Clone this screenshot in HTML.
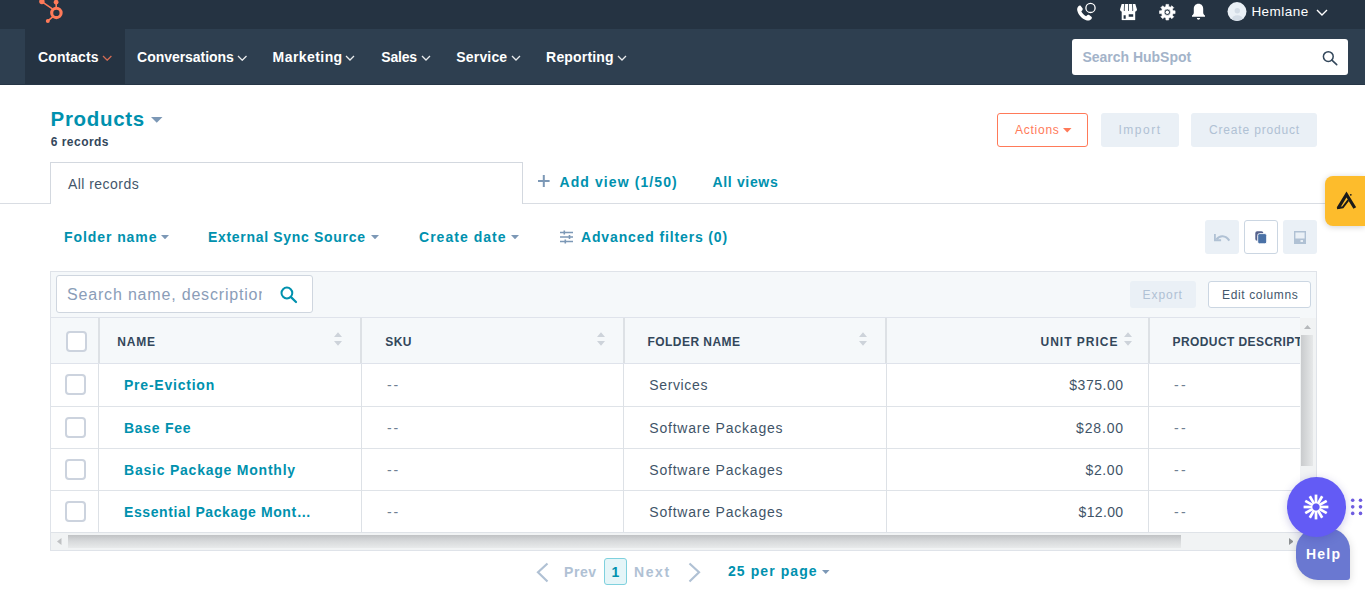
<!DOCTYPE html>
<html lang="en"><head><meta charset="utf-8"><title>Products</title>
<style>
html,body{margin:0;padding:0}
body{width:1365px;height:591px;overflow:hidden;background:#fff;position:relative;font-family:"Liberation Sans", sans-serif;}
.abs{position:absolute;display:block}
.t{position:absolute;white-space:nowrap;line-height:1;font-family:"Liberation Sans", sans-serif;}
</style></head>
<body>
<header class="abs" style="left:0;top:0;width:1365px;height:29px;background:#253342"></header>
<nav class="abs" style="left:0;top:29px;width:1365px;height:56px;background:#2e3f50"></nav>
<div class="abs" style="left:25px;top:29px;width:100px;height:56px;background:#253342"></div>
<div class="abs" style="left:0;top:84px;width:1365px;height:1px;background:#263646"></div>
<svg class="abs" style="left:36px;top:0" width="30" height="26" viewBox="36 0 30 26">
<g fill="#ff7a59" stroke="none">
<circle cx="41.9" cy="1.5" r="2.7"/><circle cx="56.1" cy="2.2" r="2.4"/><circle cx="47.8" cy="21" r="2"/>
</g>
<g stroke="#ff7a59" fill="none" stroke-linecap="round">
<circle cx="56.4" cy="12.9" r="4.700" stroke-width="3.100"/>
<path d="M42.5 2.2 L52 8.6" stroke-width="1.600"/><path d="M56.2 2.5 V7" stroke-width="1.600"/><path d="M48.2 20.6 L52.4 17.2" stroke-width="1.600"/>
</g></svg>
<span class="t" style="left:38.10px;top:49.90px;font-size:14px;color:#fff;letter-spacing:0.064px;font-weight:700;">Contacts</span>
<svg class="abs" style="left:102.00px;top:55.20px" width="10.40" height="6.20" viewBox="-1 -1 10.40 6.20"><path d="M0 0 L4.20 4.20 L8.40 0" fill="none" stroke="#ff7a59" stroke-width="1.3" stroke-opacity="0.8"/></svg>
<span class="t" style="left:137.10px;top:49.90px;font-size:14px;color:#fff;letter-spacing:-0.046px;font-weight:700;">Conversations</span>
<svg class="abs" style="left:236.50px;top:55.17px" width="10.50" height="6.25" viewBox="-1 -1 10.50 6.25"><path d="M0 0 L4.25 4.25 L8.50 0" fill="none" stroke="#fff" stroke-width="1.3" stroke-opacity="0.9"/></svg>
<span class="t" style="left:272.60px;top:49.90px;font-size:14px;color:#fff;letter-spacing:0.431px;font-weight:700;">Marketing</span>
<svg class="abs" style="left:345.00px;top:55.30px" width="10.00" height="6.00" viewBox="-1 -1 10.00 6.00"><path d="M0 0 L4.00 4.00 L8.00 0" fill="none" stroke="#fff" stroke-width="1.3" stroke-opacity="0.9"/></svg>
<span class="t" style="left:381.35px;top:49.90px;font-size:14px;color:#fff;letter-spacing:-0.200px;font-weight:700;">Sales</span>
<svg class="abs" style="left:421.00px;top:55.30px" width="10.00" height="6.00" viewBox="-1 -1 10.00 6.00"><path d="M0 0 L4.00 4.00 L8.00 0" fill="none" stroke="#fff" stroke-width="1.3" stroke-opacity="0.9"/></svg>
<span class="t" style="left:456.35px;top:49.90px;font-size:14px;color:#fff;letter-spacing:0.158px;font-weight:700;">Service</span>
<svg class="abs" style="left:511.00px;top:55.30px" width="10.00" height="6.00" viewBox="-1 -1 10.00 6.00"><path d="M0 0 L4.00 4.00 L8.00 0" fill="none" stroke="#fff" stroke-width="1.3" stroke-opacity="0.9"/></svg>
<span class="t" style="left:546.10px;top:49.90px;font-size:14px;color:#fff;letter-spacing:0.181px;font-weight:700;">Reporting</span>
<svg class="abs" style="left:617.00px;top:55.30px" width="10.00" height="6.00" viewBox="-1 -1 10.00 6.00"><path d="M0 0 L4.00 4.00 L8.00 0" fill="none" stroke="#fff" stroke-width="1.3" stroke-opacity="0.9"/></svg>
<svg class="abs" style="left:1075px;top:2px" width="23" height="21" viewBox="0 0 23 21">
<path d="M3.2 3.6c.9-.9 1.9-1.2 2.6-.4l1.700 2.300c.5.7.3 1.500-.3 2.100l-.9.9c.9 2 2.600 3.800 4.800 4.900l1-.9c.6-.6 1.400-.7 2.100-.2l2.200 1.600c.8.600.600 1.700-.2 2.500-1.300 1.400-3.100 1.800-5.100 1-4.200-1.700-7.600-5.300-8.700-9.300-.5-1.800-.2-3.400.800-4.500z" fill="#fff" transform="translate(0 .8)"/>
<circle cx="15.5" cy="5.9" r="4.600" fill="#253342" stroke="#fff" stroke-width="1.300"/></svg>
<svg class="abs" style="left:1120px;top:4px" width="17" height="17" viewBox="0 0 17 17">
<path d="M1.700 7h13.500v9.100H1.700z" fill="#fff"/>
<path d="M1.700 .1h13.600L17 5.600a2.120 2.100 0 0 1-4.250 0a2.120 2.100 0 0 1-4.250 0a2.120 2.100 0 0 1-4.250 0a2.120 2.100 0 0 1-4.250 0z" fill="#fff"/>
<g stroke="#253342" stroke-width=".8" fill="none"><path d="M4.600 0L4.250 6.200M8.500 0v6.200M12.400 0l.35 6.200"/></g>
<path d="M3.600 11.200h2.100v3.500H3.600z M8.700 10.200h4.500v2.500H8.700z" fill="#253342"/>
<path d="M4.250 7.700a2.120 1.200 0 0 0 0 0" fill="none"/>
</svg>
<svg class="abs" style="left:1158px;top:3px" width="19" height="19" viewBox="0 0 19 19"><path d="M7.94 1.42 L10.66 1.42 L10.68 3.46 L12.38 4.17 L13.84 2.74 L15.76 4.66 L14.33 6.12 L15.04 7.82 L17.08 7.84 L17.08 10.56 L15.04 10.58 L14.33 12.28 L15.76 13.74 L13.84 15.66 L12.38 14.23 L10.68 14.94 L10.66 16.98 L7.94 16.98 L7.92 14.94 L6.22 14.23 L4.76 15.66 L2.84 13.74 L4.27 12.28 L3.56 10.58 L1.52 10.56 L1.52 7.84 L3.56 7.82 L4.27 6.12 L2.84 4.66 L4.76 2.74 L6.22 4.17 L7.92 3.46Z M6.20 9.2 a3.1 3.1 0 1 0 6.20 0 a3.1 3.1 0 1 0 -6.20 0Z" fill="#fff" fill-rule="evenodd" stroke="#fff" stroke-width=".6" stroke-linejoin="round"/><circle cx="9.3" cy="9.2" r="1.7" fill="#fff"/></svg>
<svg class="abs" style="left:1191px;top:3px" width="15" height="18" viewBox="0 0 15 18">
<path d="M7.500 .8c-2.900 0-4.700 2.200-4.700 5v3.600c0 1.300-.7 2.300-1.800 3.100v1.300h13v-1.300c-1.100-.8-1.800-1.800-1.800-3.100v-3.600c0-2.800-1.800-5-4.700-5z" fill="#fff"/>
<path d="M5.900 15h3.200c0 1-.7 1.700-1.600 1.700s-1.600-.7-1.600-1.700z" fill="#fff"/></svg>
<svg class="abs" style="left:1227px;top:2px" width="20" height="20" viewBox="0 0 20 20">
<defs><clipPath id="av"><circle cx="10" cy="9.600" r="9.500"/></clipPath></defs>
<circle cx="10" cy="9.600" r="9.500" fill="#eaf0f6"/>
<g clip-path="url(#av)" fill="#d3dce6"><circle cx="10.300" cy="8.800" r="2.700"/><ellipse cx="10.300" cy="17.800" rx="5.600" ry="4.600"/></g></svg>
<span class="t" style="left:1251.40px;top:4.82px;font-size:13.5px;color:#fff;letter-spacing:0.467px;">Hemlane</span>
<svg class="abs" style="left:1316.00px;top:8.80px" width="12.00" height="7.00" viewBox="-1 -1 12.00 7.00"><path d="M0 0 L5.00 5.00 L10.00 0" fill="none" stroke="#fff" stroke-width="1.4" stroke-opacity="1"/></svg>
<div class="abs" style="left:1072px;top:39px;width:275.5px;height:36px;background:#fff;border-radius:3px"></div>
<span class="t" style="left:1082.50px;top:49.90px;font-size:14px;color:#a3b3c9;letter-spacing:-0.019px;font-weight:700;">Search HubSpot</span>
<svg class="abs" style="left:1321px;top:49px" width="18" height="17" viewBox="0 0 18 17"><circle cx="7.300" cy="7.600" r="4.900" fill="none" stroke="#33475b" stroke-width="1.5"/><path d="M10.900 11.200l4.800 4.500" stroke="#33475b" stroke-width="1.600" stroke-linecap="round"/></svg>
<span class="t h1" style="left:50.55px;top:109.40px;font-size:20.5px;color:#0091ae;letter-spacing:0.679px;font-weight:700;">Products</span>
<svg class="abs" style="left:151px;top:117px" width="12" height="6" viewBox="0 0 12 6"><path d="M0 0h11.500l-5.750 5.800z" fill="#7c98b6"/></svg>
<span class="t" style="left:50.80px;top:135.84px;font-size:12px;color:#33475b;letter-spacing:0.463px;font-weight:700;">6 records</span>
<div class="abs" style="left:997px;top:113px;width:91px;height:33.5px;border:1px solid #ff7a59;border-radius:3px;box-sizing:border-box;background:#fff"></div>
<span class="t" style="left:1015.00px;top:124.04px;font-size:12px;color:#ff7a59;letter-spacing:0.750px;">Actions</span>
<svg class="abs" style="left:1063px;top:127.500px" width="9" height="5" viewBox="0 0 9 5"><path d="M0 0h8.500l-4.250 4.500z" fill="#ff7a59"/></svg>
<div class="abs" style="left:1101px;top:113px;width:77.5px;height:33.5px;background:#eaf0f6;border-radius:3px"></div>
<span class="t" style="left:1118.50px;top:124.04px;font-size:12px;color:#b0c1d4;letter-spacing:1.500px;">Import</span>
<div class="abs" style="left:1191px;top:113px;width:125.5px;height:33.5px;background:#eaf0f6;border-radius:3px"></div>
<span class="t" style="left:1209.00px;top:124.04px;font-size:12px;color:#b0c1d4;letter-spacing:0.827px;">Create product</span>
<div class="abs" style="left:0px;top:203px;width:1365px;height:1px;background:#d9dde3"></div>
<div class="abs" style="left:50px;top:162px;width:472.5px;height:42px;border:1px solid #d3d8df;border-bottom:none;box-sizing:border-box;background:#fff"></div>
<span class="t" style="left:68.00px;top:177.40px;font-size:14px;color:#43566b;letter-spacing:0.450px;">All records</span>
<svg class="abs" style="left:538px;top:175px" width="12" height="12" viewBox="0 0 12 12"><path d="M5.800 0v12M0 6h11.600" stroke="#7c98b6" stroke-width="2" fill="none"/></svg>
<span class="t" style="left:559.50px;top:174.90px;font-size:14px;color:#0091ae;letter-spacing:1.089px;font-weight:700;">Add view (1/50)</span>
<span class="t" style="left:712.50px;top:174.90px;font-size:14px;color:#0091ae;letter-spacing:0.656px;font-weight:700;">All views</span>
<div class="abs" style="left:1324.5px;top:176px;width:40.5px;height:49.5px;background:#fdbc2c;border-radius:8px 0 0 8px;box-shadow:0 1px 6px rgba(0,0,0,.18)"></div>
<svg class="abs" style="left:1334px;top:190px" width="25" height="21" viewBox="1334 190 25 21"><path d="M1338.200 208 L1346.500 194.500 L1354.800 208" fill="none" stroke="#1a1a1a" stroke-width="3.200" stroke-linejoin="miter" stroke-linecap="butt"/><path d="M1337 208.200 L1342.800 207.300 L1348.300 200.200" fill="none" stroke="#1a1a1a" stroke-width="2" stroke-linejoin="miter"/><circle cx="1350.800" cy="194.800" r=".9" fill="#1a1a1a"/></svg>
<span class="t" style="left:64.00px;top:229.90px;font-size:14px;color:#0091ae;letter-spacing:0.925px;font-weight:700;">Folder name</span>
<svg class="abs" style="left:161px;top:235px" width="8" height="4.3" viewBox="0 0 8 4.3"><path d="M0 0h8l-4.00 4.3z" fill="#7c98b6"/></svg>
<span class="t" style="left:208.00px;top:229.90px;font-size:14px;color:#0091ae;letter-spacing:0.684px;font-weight:700;">External Sync Source</span>
<svg class="abs" style="left:371px;top:235px" width="8" height="4.3" viewBox="0 0 8 4.3"><path d="M0 0h8l-4.00 4.3z" fill="#7c98b6"/></svg>
<span class="t" style="left:419.00px;top:229.90px;font-size:14px;color:#0091ae;letter-spacing:1.025px;font-weight:700;">Create date</span>
<svg class="abs" style="left:511px;top:235px" width="8" height="4.3" viewBox="0 0 8 4.3"><path d="M0 0h8l-4.00 4.3z" fill="#7c98b6"/></svg>
<svg class="abs" style="left:560px;top:230px" width="14" height="14" viewBox="0 0 14 14"><g stroke="#7c98b6" stroke-width="1.700" fill="none"><path d="M0 2.500h13M0 7h13M0 11.500h13"/></g><g fill="none" stroke="#7c98b6" stroke-width="1.600"><path d="M4.300 .5v4M9.500 5v4M5.300 9.500v4"/></g></svg>
<span class="t" style="left:581.00px;top:229.90px;font-size:14px;color:#0091ae;letter-spacing:0.855px;font-weight:700;">Advanced filters (0)</span>
<div class="abs" style="left:1205px;top:220px;width:34px;height:33.5px;background:#eaf0f6;border-radius:3px"></div>
<div class="abs" style="left:1244px;top:220px;width:33.5px;height:33.5px;background:#fff;border:1px solid #cbd6e2;box-sizing:border-box;border-radius:3px"></div>
<div class="abs" style="left:1283px;top:220px;width:33.5px;height:33.5px;background:#eaf0f6;border-radius:3px"></div>
<svg class="abs" style="left:1214px;top:231px" width="17" height="12" viewBox="0 0 17 12"><path d="M2.500 8.300C5.500 4.200 11.500 3.800 15.300 9.600" fill="none" stroke="#b0c1d4" stroke-width="2.100"/><path d="M.8 3v6.300h6.300" fill="none" stroke="#b0c1d4" stroke-width="2"/></svg>
<svg class="abs" style="left:1255px;top:231px" width="12" height="13" viewBox="0 0 12 13"><rect x=".3" y=".3" width="8" height="9.500" rx="1.800" fill="#56628c"/><rect x="2.700" y="2.600" width="9" height="10.200" rx="1.800" fill="#4a71a6" stroke="#fff" stroke-width=".9"/></svg>
<svg class="abs" style="left:1294px;top:231px" width="12" height="13" viewBox="0 0 12 13"><path d="M.7 .7h10.600v11.600H.7z" fill="#eaf0f6" stroke="#b0c1d4" stroke-width="1.400"/><path d="M.7 7.500h10.600v4.800H.7z" fill="#b0c1d4"/><path d="M6.500 9h2.500v2H6.500z" fill="#eaf0f6"/></svg>
<div class="abs" style="left:50px;top:271px;width:1267px;height:280px;background:#f5f8fa;border:1px solid #dfe3e9;box-sizing:border-box"></div>
<div class="abs" style="left:56px;top:275px;width:257px;height:38px;background:#fff;border:1px solid #cfd6df;box-sizing:border-box;border-radius:3px"></div>
<div class="abs" style="left:60px;top:280px;width:201.700px;height:28px;overflow:hidden"><span class="t" style="left:7.05px;top:7.46px;font-size:16px;color:#8a9db8;letter-spacing:0.814px;">Search name, description</span></div>
<svg class="abs" style="left:279px;top:285px" width="20" height="20" viewBox="0 0 20 20"><circle cx="7.900" cy="8" r="5.400" fill="none" stroke="#0091ae" stroke-width="2"/><path d="M12 12.100l5 4.900" stroke="#0091ae" stroke-width="2.200" stroke-linecap="round"/></svg>
<div class="abs" style="left:1129.5px;top:281.25px;width:66.5px;height:26.5px;background:#eaf0f6;border-radius:3px"></div>
<span class="t" style="left:1142.50px;top:289.04px;font-size:12px;color:#b0c1d4;letter-spacing:0.950px;">Export</span>
<div class="abs" style="left:1208px;top:281.25px;width:102.5px;height:26.5px;background:#fff;border:1px solid #cbd6e2;box-sizing:border-box;border-radius:3px"></div>
<span class="t" style="left:1222.00px;top:289.04px;font-size:12px;color:#43566b;letter-spacing:0.641px;">Edit columns</span>
<div class="abs" style="left:51px;top:317px;width:1249px;height:47px;background:#f5f8fa;border-top:1px solid #dfe3eb;border-bottom:1px solid #dfe3eb;box-sizing:border-box"></div>
<div class="abs" style="left:51px;top:364px;width:1249px;height:168px;background:#fff"></div>
<div class="abs" style="left:51px;top:406px;width:1249px;height:1px;background:#dfe3e8"></div>
<div class="abs" style="left:51px;top:448px;width:1249px;height:1px;background:#dfe3e8"></div>
<div class="abs" style="left:51px;top:490px;width:1249px;height:1px;background:#dfe3e8"></div>
<div class="abs" style="left:98px;top:364px;width:1px;height:168px;background:#dde1e6"></div>
<div class="abs" style="left:98px;top:318px;width:2px;height:45px;background:#dde1e5"></div>
<div class="abs" style="left:361px;top:364px;width:1px;height:168px;background:#dde1e6"></div>
<div class="abs" style="left:360px;top:318px;width:2px;height:45px;background:#dde1e5"></div>
<div class="abs" style="left:623px;top:364px;width:1px;height:168px;background:#dde1e6"></div>
<div class="abs" style="left:623px;top:318px;width:2px;height:45px;background:#dde1e5"></div>
<div class="abs" style="left:886px;top:364px;width:1px;height:168px;background:#dde1e6"></div>
<div class="abs" style="left:885px;top:318px;width:2px;height:45px;background:#dde1e5"></div>
<div class="abs" style="left:1148px;top:364px;width:1px;height:168px;background:#dde1e6"></div>
<div class="abs" style="left:1148px;top:318px;width:2px;height:45px;background:#dde1e5"></div>
<div class="abs" style="left:66px;top:331px;width:21px;height:21px;background:#fff;border:2px solid #ccd3de;box-sizing:border-box;border-radius:4px"></div>
<div class="abs" style="left:65px;top:374px;width:21px;height:21px;background:#fff;border:2px solid #ccd3de;box-sizing:border-box;border-radius:4px"></div>
<div class="abs" style="left:65px;top:417px;width:21px;height:21px;background:#fff;border:2px solid #ccd3de;box-sizing:border-box;border-radius:4px"></div>
<div class="abs" style="left:65px;top:459px;width:21px;height:21px;background:#fff;border:2px solid #ccd3de;box-sizing:border-box;border-radius:4px"></div>
<div class="abs" style="left:65px;top:501px;width:21px;height:21px;background:#fff;border:2px solid #ccd3de;box-sizing:border-box;border-radius:4px"></div>
<span class="t" style="left:117.25px;top:335.84px;font-size:12px;color:#33475b;letter-spacing:0.833px;font-weight:700;">NAME</span>
<span class="t" style="left:385.25px;top:335.84px;font-size:12px;color:#33475b;letter-spacing:0.375px;font-weight:700;">SKU</span>
<span class="t" style="left:647.50px;top:335.84px;font-size:12px;color:#33475b;letter-spacing:0.450px;font-weight:700;">FOLDER NAME</span>
<span class="t" style="left:1040.50px;top:335.84px;font-size:12px;color:#33475b;letter-spacing:1.000px;font-weight:700;">UNIT PRICE</span>
<div class="abs" style="left:1160px;top:330px;width:140px;height:24px;overflow:hidden"><span class="t" style="left:12.50px;top:5.84px;font-size:12px;color:#33475b;letter-spacing:0.414px;font-weight:700;">PRODUCT DESCRIPTION</span></div>
<svg class="abs" style="left:334px;top:332.300px" width="8" height="14" viewBox="0 0 8 14"><path d="M0 5L4 .2L8 5z M0 9L4 13.800L8 9z" fill="#cdd3da"/></svg>
<svg class="abs" style="left:596.5px;top:332.300px" width="8" height="14" viewBox="0 0 8 14"><path d="M0 5L4 .2L8 5z M0 9L4 13.800L8 9z" fill="#cdd3da"/></svg>
<svg class="abs" style="left:858.7px;top:332.300px" width="8" height="14" viewBox="0 0 8 14"><path d="M0 5L4 .2L8 5z M0 9L4 13.800L8 9z" fill="#cdd3da"/></svg>
<svg class="abs" style="left:1124px;top:332.300px" width="8" height="14" viewBox="0 0 8 14"><path d="M0 5L4 .2L8 5z M0 9L4 13.800L8 9z" fill="#cdd3da"/></svg>
<span class="t" style="left:124.00px;top:377.90px;font-size:14px;color:#0091ae;letter-spacing:0.773px;font-weight:700;">Pre-Eviction</span>
<span class="t" style="left:387.00px;top:377.90px;font-size:14px;color:#6f8093;letter-spacing:1.750px;">--</span>
<span class="t" style="left:649.25px;top:377.90px;font-size:14px;color:#3f5468;letter-spacing:0.643px;">Services</span>
<span class="t" style="left:1069.25px;top:377.90px;font-size:14px;color:#3f5468;letter-spacing:0.542px;">$375.00</span>
<span class="t" style="left:1174.00px;top:377.90px;font-size:14px;color:#6f8093;letter-spacing:2.250px;">--</span>
<span class="t" style="left:124.00px;top:420.55px;font-size:14px;color:#0091ae;letter-spacing:0.714px;font-weight:700;">Base Fee</span>
<span class="t" style="left:387.00px;top:420.55px;font-size:14px;color:#6f8093;letter-spacing:1.750px;">--</span>
<span class="t" style="left:649.25px;top:420.55px;font-size:14px;color:#3f5468;letter-spacing:0.797px;">Software Packages</span>
<span class="t" style="left:1076.00px;top:420.55px;font-size:14px;color:#3f5468;letter-spacing:0.850px;">$28.00</span>
<span class="t" style="left:1174.00px;top:420.55px;font-size:14px;color:#6f8093;letter-spacing:2.250px;">--</span>
<span class="t" style="left:124.00px;top:462.55px;font-size:14px;color:#0091ae;letter-spacing:0.775px;font-weight:700;">Basic Package Monthly</span>
<span class="t" style="left:387.00px;top:462.55px;font-size:14px;color:#6f8093;letter-spacing:1.750px;">--</span>
<span class="t" style="left:649.25px;top:462.55px;font-size:14px;color:#3f5468;letter-spacing:0.797px;">Software Packages</span>
<span class="t" style="left:1085.50px;top:462.55px;font-size:14px;color:#3f5468;letter-spacing:0.625px;">$2.00</span>
<span class="t" style="left:1174.00px;top:462.55px;font-size:14px;color:#6f8093;letter-spacing:2.250px;">--</span>
<span class="t" style="left:124.00px;top:504.55px;font-size:14px;color:#0091ae;letter-spacing:0.602px;font-weight:700;">Essential Package Mont…</span>
<span class="t" style="left:387.00px;top:504.55px;font-size:14px;color:#6f8093;letter-spacing:1.750px;">--</span>
<span class="t" style="left:649.25px;top:504.55px;font-size:14px;color:#3f5468;letter-spacing:0.797px;">Software Packages</span>
<span class="t" style="left:1078.50px;top:504.55px;font-size:14px;color:#3f5468;letter-spacing:0.350px;">$12.00</span>
<span class="t" style="left:1174.00px;top:504.55px;font-size:14px;color:#6f8093;letter-spacing:2.250px;">--</span>
<div class="abs" style="left:1300px;top:318px;width:16px;height:214px;background:#f1f3f4"></div>
<div class="abs" style="left:1301px;top:335px;width:12px;height:131px;background:linear-gradient(90deg,#c9cbcd,#e6e8e9)"></div>
<svg class="abs" style="left:1304px;top:325px" width="7" height="4" viewBox="0 0 7 4"><path d="M0 4L3.500 0L7 4z" fill="#b5b8bb"/></svg>
<div class="abs" style="left:51px;top:532px;width:1265px;height:18px;background:#f1f3f4;border-top:1px solid #dfe3e8;box-sizing:border-box"></div>
<div class="abs" style="left:68px;top:535px;width:1113px;height:13px;background:linear-gradient(180deg,#c0c2c4,#d6d8da 45%,#e8eaeb)"></div>
<svg class="abs" style="left:57px;top:538px" width="4.500" height="7" viewBox="0 0 4.500 7"><path d="M4.500 0L0 3.500L4.500 7z" fill="#bfc1c3"/></svg>
<svg class="abs" style="left:1288.500px;top:537.500px" width="4.500" height="7" viewBox="0 0 4.500 7"><path d="M0 0L4.500 3.500L0 7z" fill="#8c8f92"/></svg>
<svg class="abs" style="left:536px;top:561.500px" width="13" height="21" viewBox="0 0 13 21"><path d="M11.500 1.500L2 10.300L11.500 19.500" fill="none" stroke="#b0c1d4" stroke-width="2.200"/></svg>
<span class="t" style="left:564.00px;top:565.15px;font-size:14px;color:#b0c1d4;letter-spacing:0.583px;font-weight:700;">Prev</span>
<div class="abs" style="left:604px;top:558px;width:23px;height:27px;background:#e5f5f8;border:1px solid #7fd1de;box-sizing:border-box;border-radius:3px"></div>
<span class="t" style="left:611.50px;top:565.15px;font-size:14px;color:#0091ae;letter-spacing:-1.000px;font-weight:700;">1</span>
<span class="t" style="left:634.00px;top:565.15px;font-size:14px;color:#b0c1d4;letter-spacing:1.583px;font-weight:700;">Next</span>
<svg class="abs" style="left:688px;top:561.500px" width="13" height="21" viewBox="0 0 13 21"><path d="M1.500 1.500L11 10.300L1.500 19.500" fill="none" stroke="#b0c1d4" stroke-width="2.200"/></svg>
<span class="t" style="left:728.00px;top:564.35px;font-size:14px;color:#0091ae;letter-spacing:1.075px;font-weight:700;">25 per page</span>
<svg class="abs" style="left:822px;top:569.5px" width="7.5" height="4.0" viewBox="0 0 7.5 4.0"><path d="M0 0h7.5l-3.75 4.0z" fill="#7c98b6"/></svg>
<div class="abs" style="left:1296px;top:528px;width:54px;height:52px;background:#6a78d1;border-radius:22px 22px 3px 22px;box-shadow:0 2px 8px rgba(0,0,0,.15)"></div>
<span class="t" style="left:1306.00px;top:547.35px;font-size:14px;color:#fff;letter-spacing:1.217px;font-weight:700;">Help</span>
<div class="abs" style="left:1287px;top:477px;width:59px;height:59.5px;background:#635bf5;border-radius:50%;box-shadow:0 2px 8px rgba(60,50,160,.25)"></div>
<svg class="abs" style="left:1302.300px;top:492.900px" width="28" height="28" viewBox="-14 -14 28 28"><g stroke="#fff" stroke-width="2.700" fill="none"><path d="M0 -3.600V-12.400" transform="rotate(0)"/><path d="M0 -3.600V-12.400" transform="rotate(30)"/><path d="M0 -3.600V-12.400" transform="rotate(60)"/><path d="M0 -3.600V-12.400" transform="rotate(90)"/><path d="M0 -3.600V-12.400" transform="rotate(120)"/><path d="M0 -3.600V-12.400" transform="rotate(150)"/><path d="M0 -3.600V-12.400" transform="rotate(180)"/><path d="M0 -3.600V-12.400" transform="rotate(210)"/><path d="M0 -3.600V-12.400" transform="rotate(240)"/><path d="M0 -3.600V-12.400" transform="rotate(270)"/><path d="M0 -3.600V-12.400" transform="rotate(300)"/><path d="M0 -3.600V-12.400" transform="rotate(330)"/></g></svg>
<svg class="abs" style="left:1350px;top:498px" width="15" height="18" viewBox="0 0 15 18"><g fill="#6e5ce0"><circle cx="2.70" cy="2.30" r="1.800"/><circle cx="2.70" cy="8.85" r="1.800"/><circle cx="2.70" cy="15.40" r="1.800"/><circle cx="10.50" cy="2.30" r="1.800"/><circle cx="10.50" cy="8.85" r="1.800"/><circle cx="10.50" cy="15.40" r="1.800"/></g></svg>
</body></html>
